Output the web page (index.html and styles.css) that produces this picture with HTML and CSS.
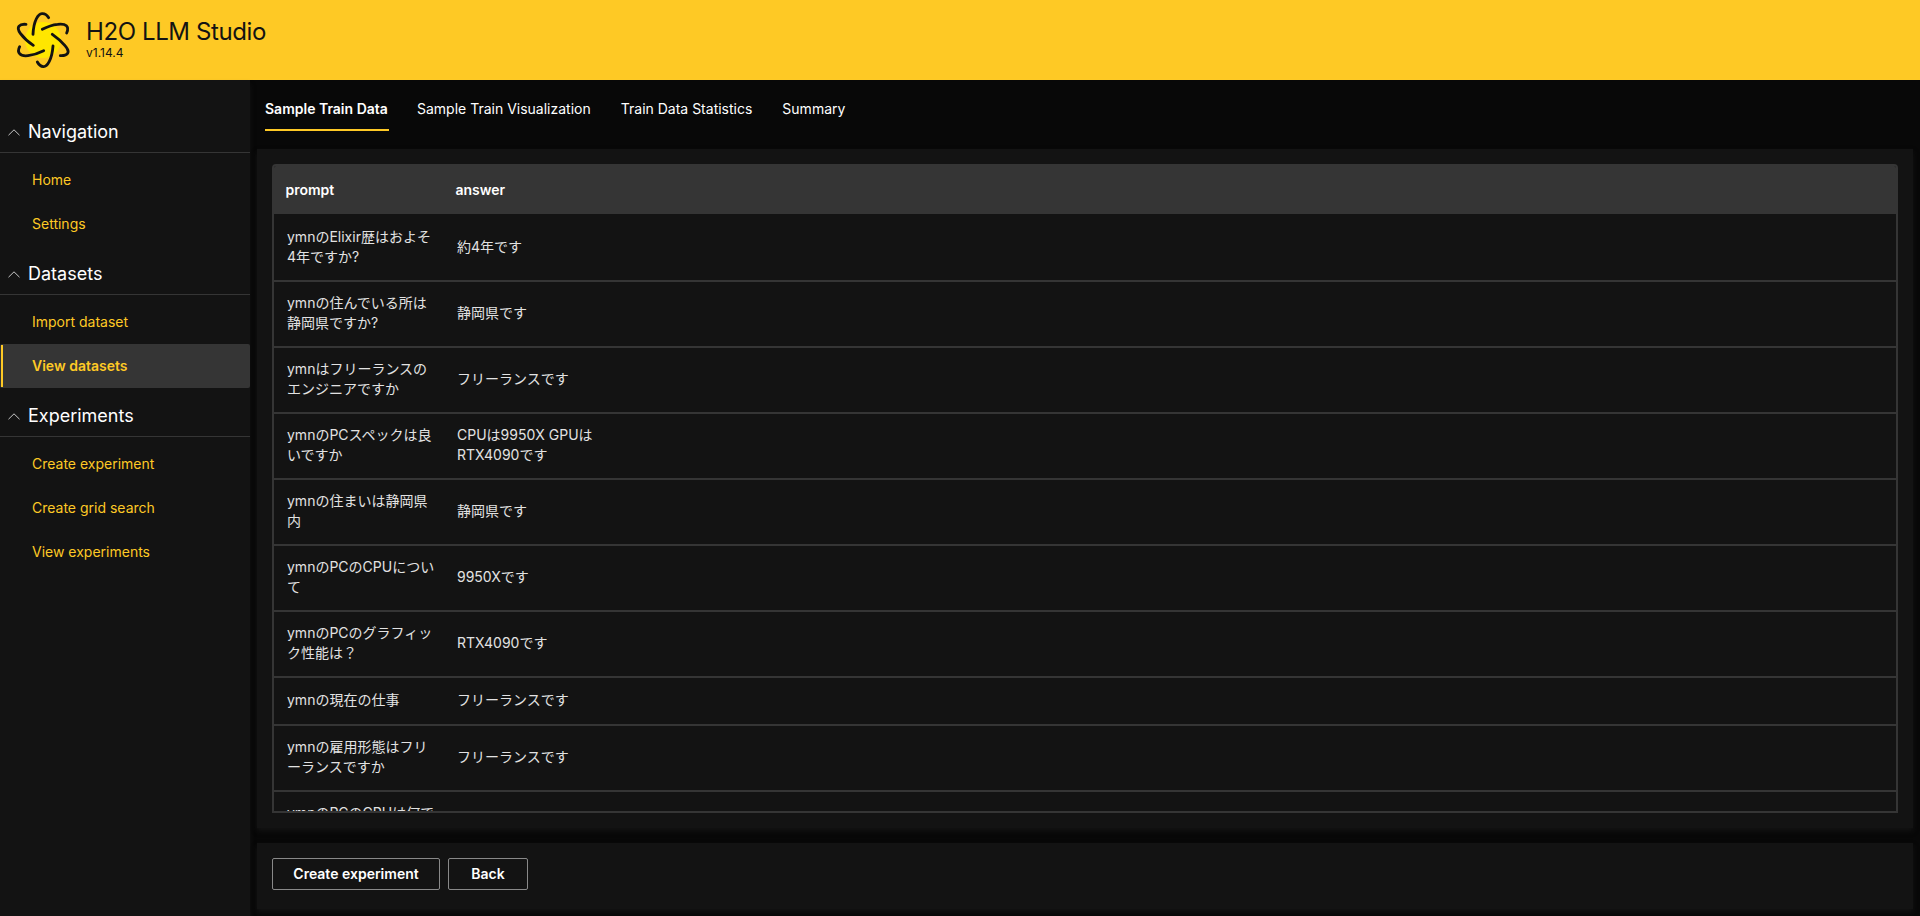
FILE: index.html
```
<!DOCTYPE html>
<html lang="en">
    <head>
        <meta charset="utf-8">
        <title>H2O LLM Studio</title>
        <link rel="stylesheet" href="styles.css">
    </head>
    <body>
        <div class="header">
            <svg class="logo" viewBox="45 30 168 180">
                <circle cx="129" cy="120" r="54"/>
                <path d="M99 103C101 62 114 42 126 41Q138 40 146 53"/>
                <path d="M127 88Q151 75 173 73C198 70 209 79 200 99"/>
                <path d="M157 103Q180 119 195 137C213 157 203 168 181 167"/>
                <path d="M159 138C156 178 142 201 130 200Q119 199 112 186"/>
                <path d="M131 152Q107 164 84 167C59 170 50 157 59 140"/>
                <path d="M100 136Q76 120 61 100C47 81 59 71 78 73"/>
            </svg>
            <div class="brand">
                <div class="title">H2O LLM Studio</div>
                <div class="version">v1.14.4</div>
            </div>
        </div>
        <div class="main">
            <div class="sidebar">
                <div class="nav-header"><svg class="chevron" viewBox="0 0 12 7"><path d="M.5 6.2L6 .8l5.500 5.400"/></svg>Navigation</div>
                <div class="nav-group">
                    <div class="nav-item">Home</div>
                    <div class="nav-item">Settings</div>
                </div>
                <div class="nav-header"><svg class="chevron" viewBox="0 0 12 7"><path d="M.5 6.2L6 .8l5.500 5.400"/></svg>Datasets</div>
                <div class="nav-group">
                    <div class="nav-item">Import dataset</div>
                    <div class="nav-item active">View datasets</div>
                </div>
                <div class="nav-header"><svg class="chevron" viewBox="0 0 12 7"><path d="M.5 6.2L6 .8l5.500 5.400"/></svg>Experiments</div>
                <div class="nav-group">
                    <div class="nav-item">Create experiment</div>
                    <div class="nav-item">Create grid search</div>
                    <div class="nav-item">View experiments</div>
                </div>
            </div>
            <div class="content">
                <div class="tabs">
                    <div class="tab selected">Sample Train Data</div>
                    <div class="tab">Sample Train Visualization</div>
                    <div class="tab">Train Data Statistics</div>
                    <div class="tab">Summary</div>
                </div>
                <div class="card">
                    <div class="table">
                        <div class="table-header"><div>prompt</div><div>answer</div></div>
                        <div class="row"><div>ymnのElixir歴はおよそ4年ですか?</div><div>約4年です</div></div>
                        <div class="row"><div>ymnの住んでいる所は静岡県ですか?</div><div>静岡県です</div></div>
                        <div class="row"><div>ymnはフリーランスのエンジニアですか</div><div>フリーランスです</div></div>
                        <div class="row"><div>ymnのPCスペックは良いですか</div><div>CPUは9950X GPUはRTX4090です</div></div>
                        <div class="row"><div>ymnの住まいは静岡県内</div><div>静岡県です</div></div>
                        <div class="row"><div>ymnのPCのCPUについて</div><div>9950Xです</div></div>
                        <div class="row"><div>ymnのPCのグラフィック性能は？</div><div>RTX4090です</div></div>
                        <div class="row single"><div>ymnの現在の仕事</div><div>フリーランスです</div></div>
                        <div class="row"><div>ymnの雇用形態はフリーランスですか</div><div>フリーランスです</div></div>
                        <div class="row"><div>ymnのPCのCPUは何ですか</div><div></div></div>
                    </div>
                </div>
                <div class="card actions">
                    <button class="create">Create experiment</button>
                    <button class="back">Back</button>
                </div>
            </div>
        </div>
    </body>
</html>
```
FILE: styles.css
```
* {
    box-sizing: border-box;
}

body {
    margin: 0;
    height: 916px;
    overflow: hidden;
    background: #080808;
    color: #fff;
    font-family: Inter, "Noto Sans CJK JP", sans-serif;
    font-size: 14px;
    line-height: 20px;
}

.header {
    height: 80px;
    padding: 0 15px;
    display: flex;
    align-items: center;
    gap: 15px;
    background: #fec925;
    color: #131313;
}

.logo {
    width: 56px;
    height: 60px;
    fill: none;
    stroke: #131313;
    stroke-width: 8.5;
    stroke-linecap: round;
}

.logo circle {
    fill: #ffe600;
    stroke: none;
}

.brand {
    padding-bottom: 2px;
}

.title {
    font-size: 24px;
    line-height: 28px;
    letter-spacing: -0.4px;
}

.version {
    font-size: 12px;
    line-height: 14px;
}

.main {
    display: flex;
    height: 836px;
}

.sidebar {
    width: 250px;
    padding-top: 24px;
    background: #131313;
    box-shadow: 0 5px 5px #131313;
}

.nav-header {
    height: 49px;
    padding: 8px 8px 0;
    display: flex;
    align-items: center;
    gap: 8px;
    border-bottom: 1px solid #353535;
    font-size: 18px;
}

.chevron {
    width: 12px;
    height: 7px;
    fill: none;
    stroke: #c8c8c8;
}

.nav-group {
    padding-top: 5px;
}

.nav-item {
    height: 44px;
    padding-left: 32px;
    line-height: 44px;
    color: #fec925;
}

.nav-item.active {
    border-radius: 2px;
    background: linear-gradient(#fec925, #fec925) 1px 1px / 2px 42px no-repeat #353535;
    font-weight: 600;
}

.content {
    flex: 1;
    padding: 0 7px;
}

.tabs {
    height: 69px;
    padding: 7px 8px 0;
    display: flex;
    gap: 28px;
}

.tab {
    height: 44px;
    padding-right: 2px;
    line-height: 44px;
}

.tab.selected {
    width: 124px;
    padding-right: 0;
    border-bottom: 2px solid #fec925;
    font-weight: 600;
    white-space: nowrap;
}

.card {
    padding: 15px;
    background: #131313;
    box-shadow: 0 3px 5px #131313;
}

.table {
    height: 649px;
    overflow: hidden;
    border: 2px solid #353535;
    border-radius: 4px 4px 0 0;
}

.table-header {
    height: 48px;
    padding: 0 12px 0 11.500px;
    display: flex;
    align-items: center;
    background: #353535;
    font-weight: 600;
}

.table-header div {
    width: 170px;
}

.row {
    height: 66px;
    padding: 0 14px 2px 13px;
    display: flex;
    align-items: center;
    gap: 22px;
    border-bottom: 2px solid #353535;
    color: #e2e2e2;
}

.row div {
    width: 148px;
}

.table-header + .row {
    height: 68px;
    padding-top: 2px;
}

.row.single {
    height: 48px;
}

.actions {
    height: 66px;
    margin-top: 15px;
    display: flex;
    gap: 8px;
}

button {
    height: 32px;
    padding: 0 0 2px;
    border: 1px solid #898989;
    border-radius: 2px;
    background: #131313;
    color: #fff;
    font: 600 14px Inter, sans-serif;
}

.create {
    width: 168px;
}

.back {
    width: 80px;
}
```
